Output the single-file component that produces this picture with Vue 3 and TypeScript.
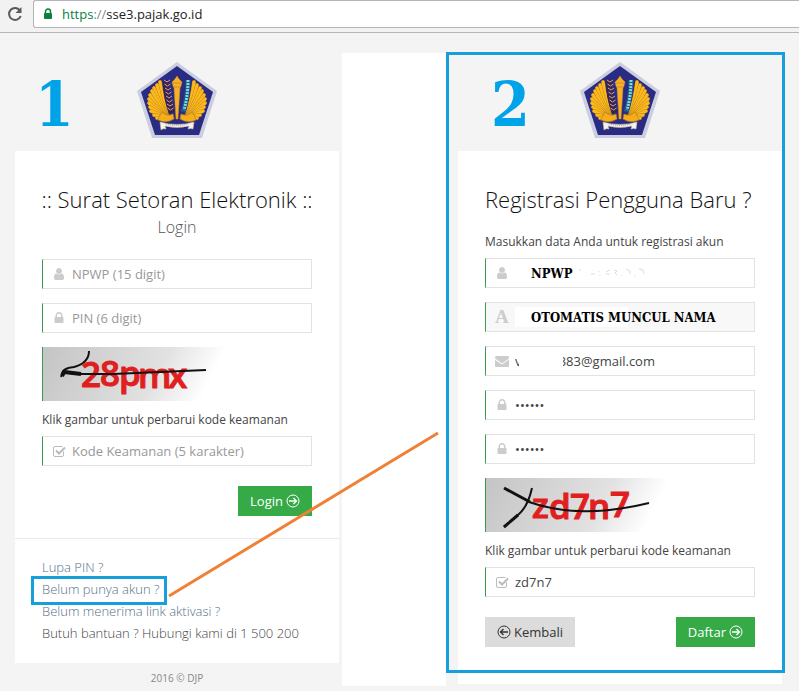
<script setup lang="ts">
import { ref } from 'vue'

const ICONS = {
  user: 'M1536 1399q0 109-62.5 187t-150.5 78h-854q-88 0-150.5-78t-62.5-187q0-85 8.5-160.5t31.5-152 58.5-131 94-89 134.5-34.5q131 128 313 128t313-128q76 0 134.5 34.5t94 89 58.5 131 31.5 152 8.5 160.5zm-256-887q0 159-112.5 271.5t-271.5 112.5-271.5-112.5-112.5-271.5 112.5-271.5 271.5-112.5 271.5 112.5 112.5 271.5z',
  lock: 'M640 768h512v-192q0-106-75-181t-181-75-181 75-75 181v192zm832 96v576q0 40-28 68t-68 28h-960q-40 0-68-28t-28-68v-576q0-40 28-68t68-28h32v-192q0-184 132-316t316-132 316 132 132 316v192h32q40 0 68 28t28 68z',
  mail: 'M1792 710v794q0 66-47 113t-113 47h-1472q-66 0-113-47t-47-113v-794q44 49 101 87 362 246 497 345 57 42 92.5 65.5t94.5 48 110 24.5h2q51 0 110-24.5t94.5-48 92.5-65.5q170-123 498-345 57-39 100-87zm0-294q0 79-49 151t-122 123q-376 261-468 325-10 7-42.5 31t-54 38.5-52 32.5-57.5 27-50 9h-2q-23 0-50-9t-57.5-27-52-32.5-54-38.5-42.5-31q-91-64-262-182.5t-205-142.5q-62-42-117-115.5t-55-136.5q0-78 41.5-130t118.5-52h1472q65 0 112.5 47t47.5 113z',
}

const host = ref('sse3.pajak.go.id')
const npwp = ref('')
const pin = ref('')
const code = ref('')
const regNpwp = ref('NPWP')
const regName = ref('OTOMATIS MUNCUL NAMA')
const regMail = ref('v' + '\u00a0'.repeat(11) + '383@gmail.com')
const regPin = ref('123456')
const regPinAgain = ref('123456')
const regCode = ref('zd7n7')

// Wing feathers of the emblem: tip coordinates of the left wing, inner to outer
const tips: [number, number][] = [
  [23, 20], [20, 23], [17, 26], [15, 29], [13, 33], [12, 37], [12, 41], [13, 45], [14, 49], [17, 53], [20, 56],
]
const feathers = tips.map(([x, y]) => `M31 57Q${(x + 27) / 2} ${(y + 54) / 2} ${x} ${y}`)
const grains = [20, 24, 28, 32, 36, 40, 44, 48]
</script>

<template>
  <svg class="defs" width="0" height="0" aria-hidden="true">
    <defs>
      <symbol id="emblem" viewBox="0 0 80 76">
        <path d="M40 0L80 29L65 76H15L0 29Z" fill="#cbcee0" />
        <path d="M40 4L76 30L62 73H18L4 30Z" fill="#2a2c83" />
        <g v-for="side in [1, -1]" :key="side" :transform="side === 1 ? undefined : 'translate(80 0) scale(-1 1)'" fill="none" stroke-linecap="round">
          <path d="M23 20Q27 35 33 57L21 57Q13 50 14 36Z" fill="#dc9a1c" />
          <template v-for="(f, i) in feathers" :key="i">
            <path :d="f" stroke="#b9801d" stroke-width="3.800" />
            <path :d="f" stroke="#fbb91e" stroke-width="3.100" />
          </template>
          <path d="M21 58Q29 62 37 57L36 52Q30 55 25 50Z" fill="#f5ae1b" stroke="#b47a1c" stroke-width=".7" />
        </g>
        <path d="M29 18Q29 36 35 51" fill="none" stroke="#352554" stroke-width="6" />
        <path v-for="(y, i) in grains" :key="y" :d="`M${27 + i / 2} ${y - 2}l3 2l3-2`" fill="none" stroke="#dda183" />
        <path d="M51 18Q51 35 46 50" fill="none" stroke="#22518b" stroke-width="5" />
        <path d="M51 18Q51 34 47 48" fill="none" stroke="#7fded6" stroke-width="3" stroke-dasharray="2 1" />
        <path d="M38 17L40 14L42 17L45 20L44 24L43 26L41 57H39L37 26L36 24L35 20Z" fill="#f9b024" stroke="#c98a20" stroke-width=".5" />
        <path d="M36 21H44M37 25H43" stroke="#c98520" stroke-width=".7" fill="none" />
        <path d="M23 60Q40 65 57 60L56 67Q54 66 51 67L52 64Q40 67 28 64L29 67Q26 66 24 68Z" fill="#f5f3ee" stroke="#cbb995" stroke-width=".6" />
        <path d="M29 62Q40 65 51 62" fill="none" stroke="#969098" stroke-width=".8" stroke-dasharray="1 1" />
      </symbol>
      <symbol id="tick-box" viewBox="0 0 14 14">
        <path d="M11.500 7.500V11Q11.500 12.500 10 12.500H3Q1.500 12.500 1.500 11V4Q1.500 2.500 3 2.500H10.500" fill="none" stroke="currentColor" />
        <path d="M4 6.500L7 9.500L13 3.500" fill="none" stroke="currentColor" stroke-width="2" />
      </symbol>
      <symbol id="arrow-ring" viewBox="0 0 14 14">
        <circle cx="7" cy="7" r="6" fill="none" stroke="currentColor" />
        <path d="M3 7H10.500M7.500 4L10.500 7L7.500 10" fill="none" stroke="currentColor" stroke-width="1.300" />
      </symbol>
      <linearGradient id="paper" x1="0" y1="0" x2="1" y2=".15">
        <stop offset="0" stop-color="#c4c4c4" />
        <stop offset=".7" stop-color="#e2e2e2" />
        <stop offset="1" stop-color="#ffffff" />
      </linearGradient>
    </defs>
  </svg>

  <header class="toolbar">
    <button class="reload" type="button" aria-label="Reload">
      <svg width="16" height="16" viewBox="0 0 16 16">
        <path d="M13 4.500A6 6 0 1 0 13.700 10" fill="none" stroke="#5a5a5a" stroke-width="2" />
        <path d="M14.500 1V7H8.500Z" fill="#5a5a5a" />
      </svg>
    </button>
    <label class="address">
      <svg width="10" height="12" viewBox="0 0 10 12">
        <path d="M2.500 6V3.500a2.500 2.500 0 0 1 5 0V6" fill="none" stroke="#0b8043" stroke-width="1.500" />
        <rect x="1" y="5" width="8" height="6" rx="1" fill="#0b8043" />
      </svg>
      <span class="scheme"><span class="secure">https</span>://</span>
      <input v-model="host" type="text" aria-label="Address" />
    </label>
  </header>

  <main class="board">
    <section class="pane">
      <span class="step">1</span>
      <svg class="logo" width="80" height="76"><use href="#emblem" /></svg>
      <div class="card">
        <form class="body" @submit.prevent>
          <h1 class="centered">:: Surat Setoran Elektronik ::</h1>
          <p class="sub">Login</p>
          <label class="field">
            <svg viewBox="0 0 1792 1792"><path :d="ICONS.user" /></svg>
            <input v-model="npwp" type="text" placeholder="NPWP (15 digit)" aria-label="NPWP" />
          </label>
          <label class="field">
            <svg viewBox="0 0 1792 1792"><path :d="ICONS.lock" /></svg>
            <input v-model="pin" type="password" placeholder="PIN (6 digit)" aria-label="PIN" />
          </label>
          <button class="captcha" type="button" aria-label="Perbarui kode keamanan">
            <svg width="180" height="54" viewBox="0 0 180 54">
              <rect width="180" height="54" fill="url(#paper)" />
              <text x="38 57 76 95 125" y="40 39 39 41 41" class="scrawl">28pmx</text>
              <path d="M18 30L20 25L34 27H70L163 23" fill="none" stroke="#111" stroke-width="2" />
              <path d="M19 28Q19 21 31 20Q46 16 46 4" fill="none" stroke="#111" stroke-width="2" />
              <path d="M19 29L21 25L38 27" fill="none" stroke="#111" stroke-width="4" />
            </svg>
          </button>
          <p class="hint">Klik gambar untuk perbarui kode keamanan</p>
          <label class="field">
            <svg class="outline"><use href="#tick-box" /></svg>
            <input v-model="code" type="text" placeholder="Kode Keamanan (5 karakter)" aria-label="Kode keamanan" />
          </label>
          <div class="actions end">
            <button class="btn primary" type="submit">Login <svg><use href="#arrow-ring" /></svg></button>
          </div>
        </form>
        <nav class="links">
          <a href="#lupa">Lupa PIN ?</a>
          <a href="#daftar" class="marked">Belum punya akun ?</a>
          <a href="#aktivasi">Belum menerima link aktivasi ?</a>
          <span>Butuh bantuan ? Hubungi kami di 1 500 200</span>
        </nav>
      </div>
      <footer class="copyright">2016 © DJP</footer>
    </section>

    <div class="gutter"></div>

    <section class="pane second">
      <span class="step">2</span>
      <svg class="logo" width="80" height="76"><use href="#emblem" /></svg>
      <div class="card">
        <form class="body" @submit.prevent>
          <h1>Registrasi Pengguna Baru ?</h1>
          <p class="intro">Masukkan data Anda untuk registrasi akun</p>
          <label class="field">
            <svg viewBox="0 0 1792 1792"><path :d="ICONS.user" /></svg>
            <input v-model="regNpwp" class="note" type="text" aria-label="NPWP" />
            <svg class="residue" viewBox="0 0 68 10">
              <path d="M1 2h2M13 6h4M21 3v1M22 7v1M28 4l4-2M28 6h4M36 2l3 1l-2 2l2 2M44 7v1M48 1l4 2v3M57 7v1M61 1l4 1l1 4" />
            </svg>
          </label>
          <label class="field locked">
            <span class="glyph">A</span>
            <span class="patch name-patch"></span>
            <input v-model="regName" class="note" type="text" readonly aria-label="Nama" />
          </label>
          <label class="field">
            <svg viewBox="0 0 1792 1792"><path :d="ICONS.mail" /></svg>
            <input v-model="regMail" type="text" aria-label="Email" />
            <span class="patch mail-patch"></span>
          </label>
          <label class="field">
            <svg viewBox="0 0 1792 1792"><path :d="ICONS.lock" /></svg>
            <input v-model="regPin" type="password" aria-label="PIN" />
          </label>
          <label class="field">
            <svg viewBox="0 0 1792 1792"><path :d="ICONS.lock" /></svg>
            <input v-model="regPinAgain" type="password" aria-label="Ulangi PIN" />
          </label>
          <button class="captcha" type="button" aria-label="Perbarui kode keamanan">
            <svg width="180" height="54" viewBox="0 0 180 54">
              <rect width="180" height="54" fill="url(#paper)" />
              <text x="46 63 84 102 124" y="40 41 41 41 39" class="scrawl">zd7n7</text>
              <path d="M18 10L44 24" fill="none" stroke="#111" stroke-width="3" />
              <path d="M46 10Q42 28 33 36L18 49" fill="none" stroke="#111" stroke-width="2" />
              <path d="M32 37L18 49" fill="none" stroke="#111" stroke-width="3" />
              <path d="M43 24Q94 42 163 25" fill="none" stroke="#111" stroke-width="2" />
            </svg>
          </button>
          <p class="hint">Klik gambar untuk perbarui kode keamanan</p>
          <label class="field">
            <svg class="outline"><use href="#tick-box" /></svg>
            <input v-model="regCode" type="text" aria-label="Kode keamanan" />
          </label>
          <div class="actions">
            <button class="btn" type="button"><svg class="back"><use href="#arrow-ring" /></svg> Kembali</button>
            <button class="btn primary" type="submit">Daftar <svg><use href="#arrow-ring" /></svg></button>
          </div>
        </form>
      </div>
    </section>

    <svg class="connector" viewBox="0 0 799 633" preserveAspectRatio="none" aria-hidden="true">
      <path d="M169 543L438 380" />
    </svg>
  </main>
</template>

<style>
body {
  margin: 0;
  background: #f4f4f4;
}
</style>

<style scoped>
* {
  box-sizing: border-box;
}
.defs {
  position: absolute;
}
.toolbar,
.board,
input,
button {
  font-family: "Open Sans", "Noto Sans", sans-serif;
  font-size: 13px;
}
.toolbar {
  display: flex;
  align-items: flex-start;
  height: 33px;
  border-bottom: 1px solid #b6b6b6;
  background: #f2f2f2;
}
.reload {
  width: 33px;
  height: 28px;
  padding: 0 3px 0 7px;
  border: 0;
  background: none;
}
.reload svg {
  display: block;
}
.address {
  flex: 1;
  display: flex;
  align-items: center;
  height: 28px;
  padding-left: 9px;
  border: 1px solid #b4b4b4;
  border-right: 0;
  border-radius: 3px 0 0 3px;
  background: #fff;
}
.scheme {
  margin-left: 9px;
  color: #888;
}
.secure {
  color: #0b8043;
}
.address input {
  flex: 1;
  min-width: 0;
  padding: 0;
  border: 0;
  outline: 0;
  background: none;
  color: #222;
}
.board {
  position: relative;
  display: grid;
  grid-template-columns: minmax(0, 342fr) minmax(0, 104fr) minmax(0, 339fr) minmax(0, 14fr);
  margin: 20px 0 5px;
  line-height: 18px;
  color: #444;
}
.gutter {
  background: #fff;
}
.pane {
  position: relative;
  padding: 9px 3px 0 15px;
}
.second {
  padding: 9px 3px 2px 12px;
}
.second::after {
  content: "";
  position: absolute;
  inset: -1px 0 13px;
  border: 3px solid #169fda;
  pointer-events: none;
}
.step {
  position: absolute;
  top: 21px;
  left: 35px;
  font: bold 62px/62px "DejaVu Serif Condensed", "DejaVu Serif", serif;
  color: #00a2e8;
}
.second .step {
  left: 45px;
}
.logo {
  display: block;
  margin: 0 auto 13px;
}
.card {
  background: #fff;
}
.body {
  padding: 32px 27px 22px;
}
.second .body {
  padding-bottom: 37px;
}
h1 {
  margin: 0;
  font-size: 22px;
  font-weight: 300;
  line-height: 32px;
  color: #111;
  white-space: nowrap;
}
.centered {
  display: flex;
  justify-content: center;
}
.sub {
  margin: 0 0 20px;
  font-size: 16px;
  font-weight: 300;
  line-height: 24px;
  text-align: center;
  color: #555;
}
.intro {
  margin: 18px 0 7px;
  font-size: 12px;
}
.field {
  position: relative;
  display: flex;
  align-items: center;
  height: 30px;
  margin-bottom: 14px;
  padding-left: 9px;
  border: 1px solid #e2e2e2;
  border-left: 1px solid #3c9a50;
  background: #fff;
}
.field > svg,
.glyph {
  flex: none;
  width: 14px;
  height: 14px;
  fill: #ccc;
  color: #bbb;
}
.glyph {
  font: bold 19px/14px "Liberation Serif", serif;
  color: #ccc;
}
.field input {
  position: relative;
  flex: 1;
  min-width: 0;
  height: 28px;
  padding: 0 0 0 6px;
  border: 0;
  outline: 0;
  background: none;
  color: #444;
}
.field input::placeholder {
  color: #999;
  opacity: 1;
}
.field .note {
  padding-left: 22px;
  font: bold 13px "DejaVu Serif Condensed", "DejaVu Serif", serif;
  color: #000;
}
.locked {
  background: #f8f8f8;
}
.field > .residue {
  position: absolute;
  top: 9px;
  left: 92px;
  width: 68px;
  height: 10px;
  fill: none;
  stroke: #ddd;
}
.patch {
  position: absolute;
  background: #fff;
}
.name-patch {
  top: 4px;
  left: 29px;
  width: 113px;
  height: 20px;
}
.mail-patch {
  top: 4px;
  left: 33px;
  width: 44px;
  height: 20px;
}
.captcha {
  display: block;
  padding: 0;
  border: 0;
  border-left: 1px solid #3c9a50;
  background: none;
}
.captcha svg {
  display: block;
}
.scrawl {
  font: 600 35px "Open Sans", sans-serif;
  fill: #e0201e;
  stroke: #e0201e;
}
.hint {
  margin: 10px 0 7px;
  font-size: 12px;
}
.actions {
  display: flex;
  justify-content: space-between;
  margin-top: 20px;
}
.end {
  justify-content: flex-end;
}
.btn {
  display: flex;
  align-items: center;
  gap: 3px;
  height: 30px;
  padding: 0 12px;
  border: 0;
  background: #dcdcdc;
  color: #333;
}
.btn svg {
  width: 14px;
  height: 14px;
}
.btn .back {
  transform: rotate(180deg);
}
.primary {
  background: #35aa47;
  color: #fff;
}
.links {
  display: flex;
  flex-direction: column;
  align-items: flex-start;
  padding: 17px 27px 19px;
  border-top: 1px solid #eaeaea;
  font-weight: 300;
  line-height: 22px;
}
.links a {
  position: relative;
  color: #56708a;
  text-decoration: none;
}
.marked::after {
  content: "";
  position: absolute;
  inset: -2px -8px -5px -11px;
  border: 3px solid #169fda;
}
.copyright {
  margin-top: 8px;
  font-size: 10px;
  line-height: 15px;
  text-align: center;
  color: #888;
}
.connector {
  position: absolute;
  inset: 0;
  width: 100%;
  height: 100%;
  pointer-events: none;
}
.connector path {
  fill: none;
  stroke: #f08036;
  stroke-width: 3px;
  vector-effect: non-scaling-stroke;
}
</style>
